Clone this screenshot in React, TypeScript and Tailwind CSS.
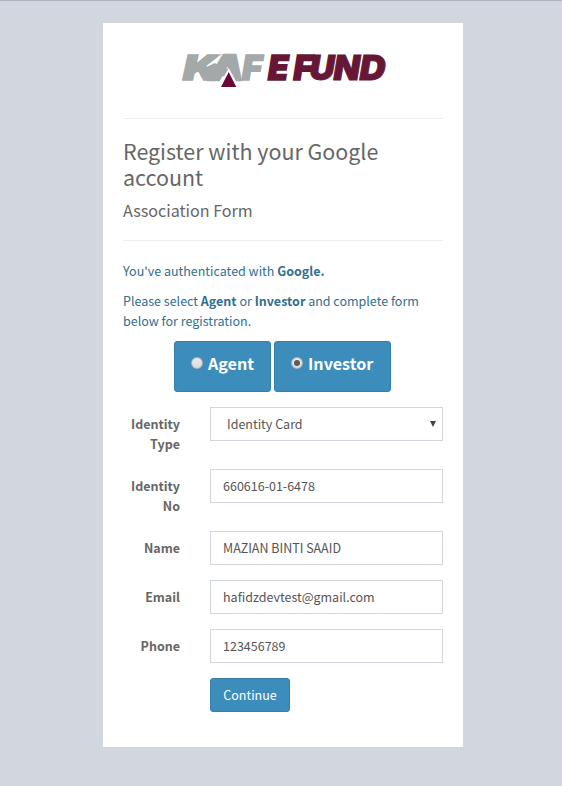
import React from "react";

function Logo() {
  return (
    <svg width="210" height="44" viewBox="0 0 210 44" className="block" role="img" aria-label="KAF E FUND">
      <g fontFamily="Inter, 'Open Sans', sans-serif" fontWeight="900" fontStyle="italic" fontSize="34" strokeWidth="1.6">
        <g fill="#a5a8a9" stroke="#a5a8a9">
          <text x="5" y="33.5" textLength="34" lengthAdjust="spacingAndGlyphs">K</text>
          <text x="32" y="33.5" textLength="33" lengthAdjust="spacingAndGlyphs" strokeWidth="2.6">A</text>
          <text x="64" y="33.5" textLength="20" lengthAdjust="spacingAndGlyphs">F</text>
        </g>
        <g fill="#661735" stroke="#661735">
          <text x="90" y="33.5" textLength="20.5" lengthAdjust="spacingAndGlyphs">E</text>
          <text x="115.5" y="33.5" textLength="19" lengthAdjust="spacingAndGlyphs">F</text>
          <text x="131.5" y="33.5" textLength="25" lengthAdjust="spacingAndGlyphs" strokeWidth="1">U</text>
          <text x="155.5" y="33.5" textLength="26.5" lengthAdjust="spacingAndGlyphs" strokeWidth="1">N</text>
          <text x="181.5" y="33.5" textLength="26" lengthAdjust="spacingAndGlyphs" strokeWidth="1">D</text>
        </g>
      </g>
      <path d="M29 34.2 L24 23 L37 17 L46 24 L42 34.2 Z" fill="#a5a8a9" />
      <path d="M50.7 22 L39.5 42.5 H62 Z" fill="#fff" />
      <path d="M50.7 26 L43 41 H58.3 Z" fill="#6a0735" />
    </svg>
  );
}

function Radio({ checked = false }: { checked?: boolean }) {
  return (
    <span className="mt-[15px] flex size-3 items-center justify-center rounded-full border border-[#b0b0b0] bg-linear-to-b from-[#e9e9e9] to-[#dcdcdc]">
      {checked && <span className="size-1.5 rounded-full bg-[#5c5c5c]" />}
    </span>
  );
}

function Choice({ label, checked, className }: { label: string; checked?: boolean; className: string }) {
  return (
    <button className={`flex h-[51px] items-start gap-[5px] rounded-[3px] border border-[#367fa9] bg-[#3c8dbc] pl-4 font-bold text-white ${className}`}>
      <Radio checked={checked} />
      <span className="mt-[8px] text-[16.1px] leading-[26px]">{label}</span>
    </button>
  );
}

function Row({ label, tall, children }: { label: string; tall?: boolean; children: React.ReactNode }) {
  return (
    <div className={`flex ${tall ? "h-[62px]" : "h-[49px]"}`}>
      <div className="w-[57px] shrink-0 pt-[7px] text-right text-[12.5px] leading-5 font-bold text-[#666]">{label}</div>
      <div className="ml-[30px] h-[34px] w-[233px] border border-[#d2d6de] text-[12.5px] leading-8 text-[#555]">{children}</div>
    </div>
  );
}

export default function App() {
  return (
    <div className="h-[786px] border-t border-[#b1b5bf] bg-[#d2d6de] pt-[22px] font-['Noto_Sans_CJK_SC','Noto_Sans_CJK_JP',sans-serif]">
      <main className="ml-[103px] h-[724px] w-[360px] bg-white px-5 text-[#666]">
        <div className="flex h-[95px] justify-center pt-[23px]">
          <Logo />
        </div>
        <hr className="border-[#eee]" />
        <h1 className="mt-[19px] text-[21.45px] leading-[26px]">Register with your Google account</h1>
        <h2 className="mt-[10px] text-[16.1px] leading-5">Association Form</h2>
        <hr className="mt-5 border-[#eee]" />
        <p className="mt-5 text-[12.5px] leading-5 text-[#31708f]">You've authenticated with <b>Google.</b></p>
        <p className="mt-[10px] text-[12.5px] leading-5 text-[#31708f]">
          Please select <b>Agent</b> or <b>Investor</b> and complete form below for registration.
        </p>
        <div className="mt-[10px] mb-[15px] flex gap-[3px] pl-[51px]">
          <Choice label="Agent" className="w-[97px]" />
          <Choice label="Investor" checked className="w-[117px]" />
        </div>
        <Row label="Identity Type" tall>
          <div className="flex justify-between pr-[5px] pl-4">
            <span>Identity Card</span>
            <svg width="8" height="32" viewBox="0 0 8 32"><path d="M1 13h6l-3 6z" fill="#444" /></svg>
          </div>
        </Row>
        <Row label="Identity No" tall><span className="pl-3">660616-01-6478</span></Row>
        <Row label="Name"><span className="pl-3">MAZIAN BINTI SAAID</span></Row>
        <Row label="Email"><span className="pl-3">hafidzdevtest@gmail.com</span></Row>
        <Row label="Phone"><span className="pl-3">123456789</span></Row>
        <button className="ml-[87px] block h-[34px] w-20 rounded-[3px] border border-[#367fa9] bg-[#3c8dbc] text-[12.5px] leading-8 text-white">Continue</button>
      </main>
    </div>
  );
}
